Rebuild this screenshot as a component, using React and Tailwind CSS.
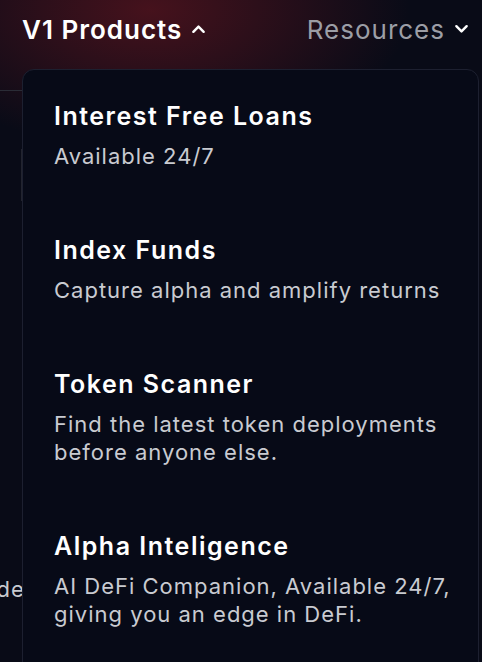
const ITEMS = [
  { title: "Interest Free Loans", desc: ["Available 24/7"] },
  { title: "Index Funds", desc: ["Capture alpha and amplify returns"] },
  { title: "Token Scanner", desc: ["Find the latest token deployments", "before anyone else."] },
  { title: "Alpha Inteligence", desc: ["AI DeFi Companion, Available 24/7,", "giving you an edge in DeFi."] }
];

const Chevron = ({ up, className }) => (
  <svg viewBox="0 0 16 10" className={className} fill="none" stroke="currentColor" strokeWidth="2.6" strokeLinecap="round" strokeLinejoin="round">
    <path d={up ? "M2.5 8L8 2.5l5.5 5.5" : "M2.5 2L8 7.5l5.5-5.5"} />
  </svg>
);

export default function App() {
  return (
    <div
      className="relative w-[482px] h-[662px] overflow-hidden bg-[#090b17] font-['Inter',sans-serif]"
      style={{ backgroundImage: "radial-gradient(ellipse 260px 140px at 150px 10px, rgba(90,20,30,0.75), rgba(9,11,23,0) 100%)" }}
    >
      <nav className="flex items-center justify-between pl-[22px] pr-[13px] h-[58px]">
        <button className="flex items-center gap-[9px] text-[26px] font-semibold text-white tracking-[1px]">
          V1 Products
          <Chevron up className="w-[15px] h-[10px] text-white" />
        </button>
        <button className="flex items-center gap-[9px] text-[26px] text-[#9c9ea6] tracking-[1px]">
          Resources
          <Chevron className="w-[15px] h-[10px] text-white" />
        </button>
      </nav>

      <div className="h-px w-[40px] bg-[#2a2c36] mt-[32px]" />
      <div className="ml-[21px] mt-[58px] w-px h-[52px] bg-[#22242e]" />
      <p className="mt-[372px] -ml-[40px] text-[22px] tracking-[1px] text-[#c8cad0]">Trade</p>

      <div className="absolute left-[22px] top-[69px] w-[457px] h-[620px] rounded-[12px] border border-[#1d2030] bg-[#070a17] pl-[31px] pt-[30px]">
        <div className="flex flex-col gap-[64px]">
          {ITEMS.map((item) => (
            <div key={item.title}>
              <p className="text-[25px] leading-[32px] font-semibold text-white tracking-[1.5px]">{item.title}</p>
              <div className="mt-[10px] text-[22px] leading-[28px] text-[#c9cbd1] tracking-[1px]">
                {item.desc.map((line) => (
                  <p key={line}>{line}</p>
                ))}
              </div>
            </div>
          ))}
        </div>
      </div>
    </div>
  );
}
